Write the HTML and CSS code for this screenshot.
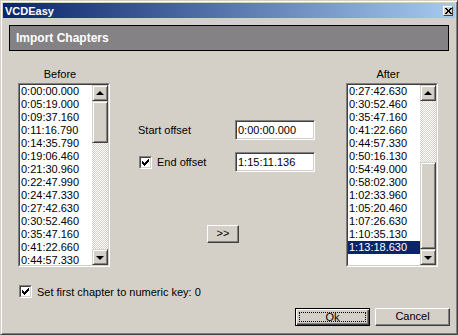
FILE: index.html
```html
<!DOCTYPE html>
<html lang="en">
<head>
  <meta charset="UTF-8">
  <title>VCDEasy</title>
  <link rel="stylesheet" href="styles.css">
</head>
<body>

  <div class="window">
    <div class="titlebar">
      <span class="title">VCDEasy</span>
      <span class="close-btn">
        <svg width="7" height="6" viewBox="0 0 7 6"><path d="M0 0h2v1H0zM5 0h2v1H5zM1 1h2v1H1zM4 1h2v1H4zM2 2h3v2H2zM1 4h2v1H1zM4 4h2v1H4zM0 5h2v1H0zM5 5h2v1H5z"/></svg>
      </span>
    </div>

    <div class="header">Import Chapters</div>

    <div class="main">
      <div class="list-col">
        <div class="list-label">Before</div>
        <div class="listbox">
          <div class="listbox-inner">
            <div class="rows">
              <div class="row">0:00:00.000</div>
              <div class="row">0:05:19.000</div>
              <div class="row">0:09:37.160</div>
              <div class="row">0:11:16.790</div>
              <div class="row">0:14:35.790</div>
              <div class="row">0:19:06.460</div>
              <div class="row">0:21:30.960</div>
              <div class="row">0:22:47.990</div>
              <div class="row">0:24:47.330</div>
              <div class="row">0:27:42.630</div>
              <div class="row">0:30:52.460</div>
              <div class="row">0:35:47.160</div>
              <div class="row">0:41:22.660</div>
              <div class="row">0:44:57.330</div>
            </div>
            <div class="scrollbar">
              <div class="sb-btn up"></div>
              <div class="sb-track"><div class="sb-thumb thumb-top"></div></div>
              <div class="sb-btn down"></div>
            </div>
          </div>
        </div>
      </div>

      <div class="middle">
        <div class="field-row">
          <span class="field-label">Start offset</span>
          <div class="textbox">0:00:00.000</div>
        </div>
        <div class="field-row">
          <span class="field-label">
            <span class="checkbox"><span class="checkbox-inner">
              <svg width="7" height="7" viewBox="0 0 7 7"><path d="M0 2h1v3H0zM1 3h1v3H1zM2 4h1v3H2zM3 3h1v3H3zM4 2h1v3H4zM5 1h1v3H5zM6 0h1v3H6z"/></svg>
            </span></span>
            End offset
          </span>
          <div class="textbox">1:15:11.136</div>
        </div>
        <div class="btn move-btn">&gt;&gt;</div>
      </div>

      <div class="list-col">
        <div class="list-label">After</div>
        <div class="listbox">
          <div class="listbox-inner">
            <div class="rows">
              <div class="row">0:27:42.630</div>
              <div class="row">0:30:52.460</div>
              <div class="row">0:35:47.160</div>
              <div class="row">0:41:22.660</div>
              <div class="row">0:44:57.330</div>
              <div class="row">0:50:16.130</div>
              <div class="row">0:54:49.000</div>
              <div class="row">0:58:02.300</div>
              <div class="row">1:02:33.960</div>
              <div class="row">1:05:20.460</div>
              <div class="row">1:07:26.630</div>
              <div class="row">1:10:35.130</div>
              <div class="row selected">1:13:18.630</div>
            </div>
            <div class="scrollbar">
              <div class="sb-btn up"></div>
              <div class="sb-track"><div class="sb-thumb thumb-bottom"></div></div>
              <div class="sb-btn down"></div>
            </div>
          </div>
        </div>
      </div>
    </div>

    <div class="footer">
      <div class="check-row">
        <span class="checkbox"><span class="checkbox-inner">
          <svg width="7" height="7" viewBox="0 0 7 7"><path d="M0 2h1v3H0zM1 3h1v3H1zM2 4h1v3H2zM3 3h1v3H3zM4 2h1v3H4zM5 1h1v3H5zM6 0h1v3H6z"/></svg>
        </span></span>
        Set first chapter to numeric key: 0
      </div>
      <div class="buttons">
        <div class="btn default"><span class="focus">Ok</span></div>
        <div class="btn">Cancel</div>
      </div>
    </div>
  </div>

</body>
</html>
```

FILE: styles.css
```css
* {
  box-sizing: border-box;
}

body {
  margin: 0;
  background-color: #d4d0c8;
  font-family: "Liberation Sans", Arial, sans-serif;
  font-size: 11px;
  color: #000;
}

.window {
  width: 458px;
  height: 335px;
  background-color: #d4d0c8;
  border: 1px solid;
  border-color: #d4d0c8 #404040 #404040 #d4d0c8;
  box-shadow: inset 1px 1px #fff, inset -1px -1px #808080;
  padding: 2px;
  display: flex;
  flex-direction: column;
}

.titlebar {
  height: 15px;
  background: linear-gradient(to right, #0a246a, #a6caf0);
  display: flex;
  align-items: center;
  justify-content: space-between;
  padding: 0 2px 0 2px;
}

.title {
  color: #fff;
  font-weight: bold;
  line-height: 14px;
  padding-top: 1px;
}

.close-btn {
  width: 10px;
  height: 10px;
  background-color: #d4d0c8;
  border: 1px solid;
  border-color: #fff #404040 #404040 #fff;
  display: flex;
  align-items: center;
  justify-content: center;
}

.close-btn svg {
  display: block;
}

.header {
  margin: 7px 6px 0;
  height: 26px;
  background-color: #848284;
  border: 1px solid #000;
  color: #fff;
  font-weight: bold;
  font-size: 12px;
  line-height: 24px;
  padding-left: 6px;
}

.main {
  display: flex;
  height: 216px;
}

.list-col {
  width: 92px;
  margin-left: 15px;
}

.list-col + .middle + .list-col {
  margin-left: 0;
}

.list-label {
  margin-top: 17px;
  height: 15px;
  line-height: 13px;
  text-align: center;
  padding-right: 8px;
}

.listbox {
  height: 184px;
  border: 1px solid;
  border-color: #808080 #fff #fff #808080;
}

.listbox-inner {
  height: 100%;
  border: 1px solid;
  border-color: #404040 #d4d0c8 #d4d0c8 #404040;
  background-color: #fff;
  display: flex;
  overflow: hidden;
}

.rows {
  flex: 1;
  overflow: hidden;
}

.row {
  height: 13px;
  line-height: 13px;
  padding-left: 1px;
  white-space: nowrap;
}

.row.selected {
  background-color: #0a246a;
  color: #fff;
}

.scrollbar {
  width: 16px;
  display: flex;
  flex-direction: column;
}

.sb-btn,
.sb-thumb {
  background-color: #d4d0c8;
  border: 1px solid;
  border-color: #d4d0c8 #404040 #404040 #d4d0c8;
  box-shadow: inset 1px 1px #fff, inset -1px -1px #808080;
}

.sb-btn {
  height: 16px;
  display: flex;
  align-items: center;
  justify-content: center;
}

.sb-btn::after {
  content: "";
  width: 0;
  height: 0;
  border-left: 4px solid transparent;
  border-right: 4px solid transparent;
}

.sb-btn.up::after {
  border-bottom: 4px solid #000;
  margin-top: -1px;
}

.sb-btn.down::after {
  border-top: 4px solid #000;
  margin-top: 1px;
}

.sb-track {
  flex: 1;
  background: repeating-conic-gradient(#fff 0 25%, #d4d0c8 0 50%) 0 0 / 2px 2px;
}

.thumb-top {
  height: 42px;
}

.thumb-bottom {
  margin-top: 61px;
  height: 87px;
}

.middle {
  width: 236px;
  padding: 69px 0 0 28px;
}

.field-row {
  display: flex;
  align-items: center;
  height: 20px;
}

.field-row + .field-row {
  margin-top: 12px;
}

.field-label {
  width: 97px;
  display: flex;
  align-items: center;
  gap: 5px;
}

.field-label .checkbox {
  margin-left: 1px;
}

.textbox {
  width: 80px;
  height: 20px;
  background-color: #fff;
  border: 1px solid;
  border-color: #808080 #fff #fff #808080;
  box-shadow: inset 1px 1px #404040, inset -1px -1px #d4d0c8;
  padding-left: 2px;
  line-height: 18px;
}

.checkbox {
  display: inline-block;
  width: 13px;
  height: 13px;
  border: 1px solid;
  border-color: #808080 #fff #fff #808080;
}

.checkbox-inner {
  display: block;
  width: 11px;
  height: 11px;
  background-color: #fff;
  border: 1px solid;
  border-color: #404040 #d4d0c8 #d4d0c8 #404040;
  padding: 1px;
}

.checkbox-inner svg {
  display: block;
}

.btn {
  width: 75px;
  height: 18px;
  background-color: #d4d0c8;
  border: 1px solid;
  border-color: #fff #404040 #404040 #fff;
  box-shadow: inset -1px -1px #808080;
  text-align: center;
  line-height: 15px;
}

.move-btn {
  width: 32px;
  margin: 53px 0 0 69px;
}

.footer {
  padding: 18px 5px 0 16px;
}

.check-row {
  display: flex;
  align-items: center;
  gap: 5px;
  height: 13px;
}

.buttons {
  display: flex;
  justify-content: flex-end;
  gap: 5px;
  margin-top: 10px;
}

.btn.default {
  border-color: #000;
  box-shadow: inset 1px 1px #fff, inset -1px -1px #404040, inset -2px -2px #808080;
  padding: 3px;
}

.focus {
  display: block;
  height: 10px;
  border: 1px dotted #000;
  line-height: 8px;
}
```
